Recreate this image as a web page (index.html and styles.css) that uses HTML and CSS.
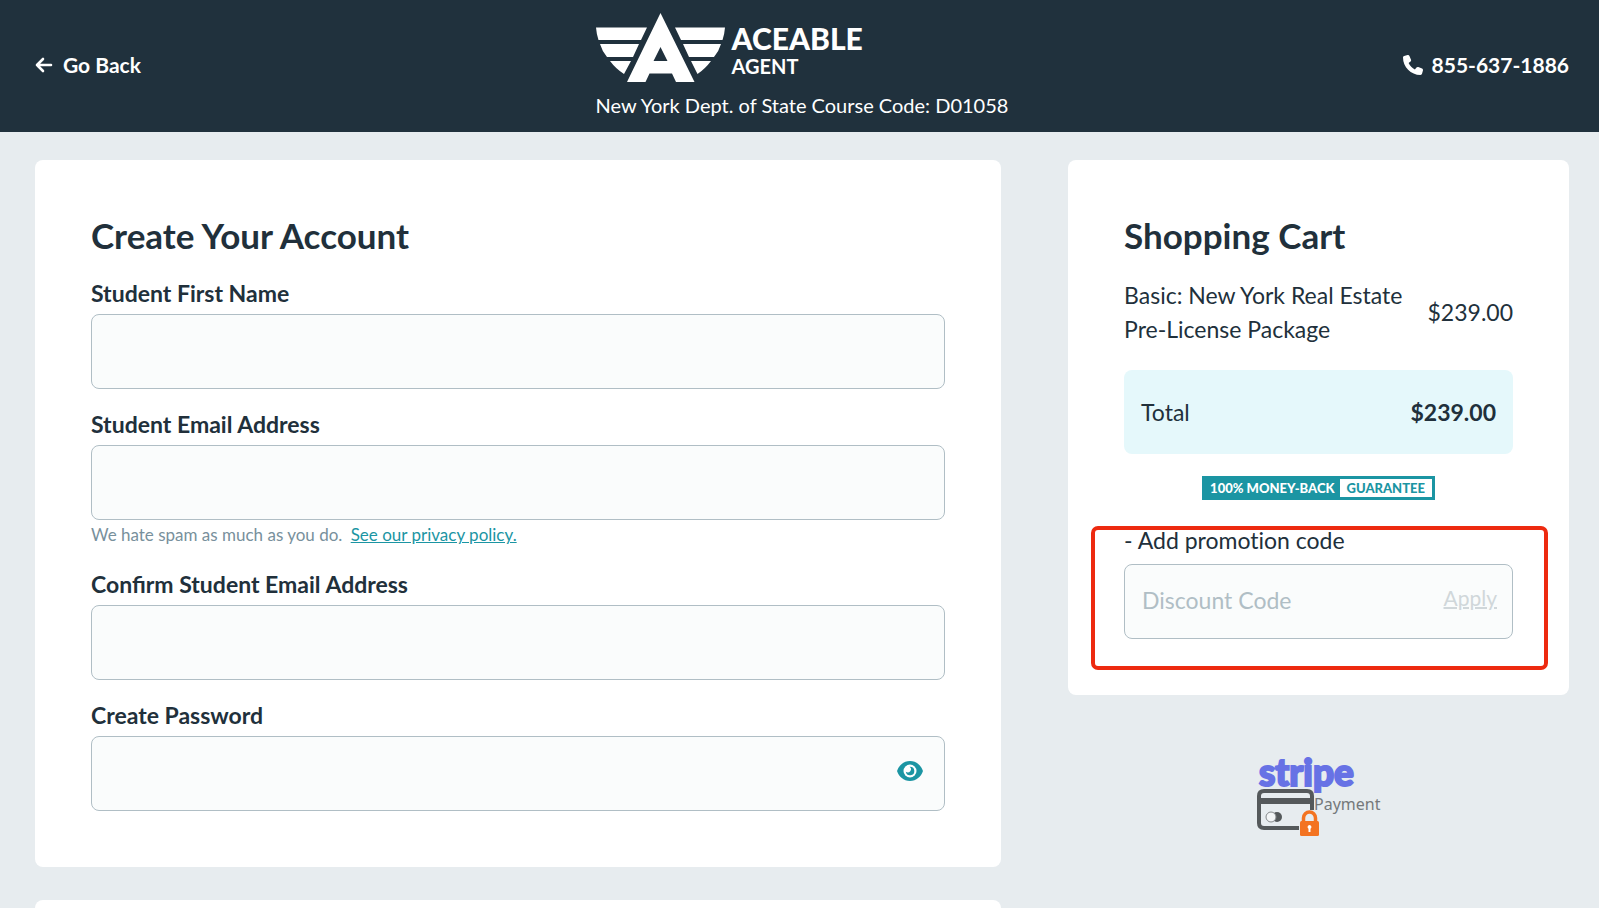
FILE: index.html
```html
<!DOCTYPE html>
<html lang="en">
<head>
<meta charset="utf-8">
<meta name="viewport" content="width=device-width, initial-scale=1">
<title>Aceable Agent Checkout</title>
<link rel="stylesheet" href="styles.css">
</head>
<body class="page">
<header class="header">
  <a class="back" href="#">
    <svg width="18" height="16" viewBox="0 0 18 16" fill="none" stroke="currentColor" stroke-width="2.6" stroke-linecap="round" stroke-linejoin="round" aria-hidden="true"><path d="M8 2 2 8 8 14M2 8H16"/></svg>
    <span>Go Back</span>
  </a>
  <div class="brand">
    <div class="logo">
      <svg width="130" height="70" viewBox="0 0 130 70" fill="#fff" aria-hidden="true">
        <path d="M0 14.500H51L45 27H2.500Q.5 21 0 14.500ZM4 31H43L37 44H11Q6 38 4 31ZM14 48H35L28 61Q20 56 14 48Z"/>
        <path d="M129 14.500H79L85 27H126.500Q128.500 21 129 14.500ZM125 31H87L93 44H118Q123 38 125 31ZM115 48H95L101.500 61Q109 56 115 48Z"/>
        <path fill-rule="evenodd" d="M64.500 0 98.500 69H80L76 60.500H53.500L49.500 69H31ZM64.500 34 57.500 48H71.500Z"/>
      </svg>
      <div class="logo-text">
        <span class="logo-name">ACEABLE</span>
        <span class="logo-sub">AGENT</span>
      </div>
    </div>
    <p class="course">New York Dept. of State Course Code: D01058</p>
  </div>
  <a class="phone" href="tel:855-637-1886">
    <svg width="20" height="20" viewBox="0 0 512 512" fill="currentColor" aria-hidden="true"><path d="M164.900 24.600c-7.700-18.600-28-28.500-47.400-23.200l-88 24C12.100 30.200 0 46 0 64c0 247.400 200.600 448 448 448 18 0 33.800-12.100 38.600-29.500l24-88c5.300-19.400-4.600-39.700-23.200-47.400l-96-40c-16.300-6.800-35.200-2.100-46.300 11.600L304.700 368C234.300 334.700 177.300 277.700 144 207.300L193.300 167c13.700-11.200 18.400-30 11.600-46.300z"/></svg>
    <span>855-637-1886</span>
  </a>
</header>

<main class="main">
  <div class="column">
    <form class="card">
      <h1 class="title">Create Your Account</h1>
      <div class="field">
        <label class="label" for="first">Student First Name</label>
        <input class="input" id="first" type="text">
      </div>
      <div class="field">
        <label class="label" for="email">Student Email Address</label>
        <input class="input" id="email" type="email">
        <p class="hint">We hate spam as much as you do. <a class="policy" href="#">See our privacy policy.</a></p>
      </div>
      <div class="field">
        <label class="label" for="confirm">Confirm Student Email Address</label>
        <input class="input" id="confirm" type="email">
      </div>
      <div class="field">
        <label class="label" for="password">Create Password</label>
        <div class="control">
          <input class="input" id="password" type="password">
          <button class="reveal" type="button" aria-label="Show password">
            <svg width="26" height="20" viewBox="0 0 26 20" aria-hidden="true"><path fill="#1b95a3" d="M13 0C6.500 0 2 4.500.3 9.200a2 2 0 0 0 0 1.600C2 15.500 6.500 20 13 20s11-4.500 12.700-9.200a2 2 0 0 0 0-1.600C24 4.500 19.500 0 13 0Z"/><circle cx="13" cy="10" r="6.500" fill="#fff"/><path fill="#1b95a3" d="M13 5.700a4.300 4.300 0 1 1-4.200 5.100A3 3 0 0 0 12.600 5.700Z"/></svg>
          </button>
        </div>
      </div>
    </form>
    <section class="next-card"></section>
  </div>

  <aside class="sidebar">
    <section class="card">
      <h2 class="title">Shopping Cart</h2>
      <div class="item">
        <span>Basic: New York Real Estate Pre-License Package</span>
        <span>$239.00</span>
      </div>
      <div class="total">
        <span>Total</span>
        <strong>$239.00</strong>
      </div>
      <div class="guarantee"><span class="guarantee-fill">100% MONEY-BACK</span><span class="guarantee-open">GUARANTEE</span></div>
      <div class="promo">
        <label class="promo-label" for="code">- Add promotion code</label>
        <div class="control">
          <input class="input" id="code" type="text" placeholder="Discount Code">
          <button class="apply" type="button">Apply</button>
        </div>
        <div class="highlight"></div>
      </div>
    </section>
    <svg class="stripe" width="124" height="96" viewBox="0 -12 124 96" role="img" aria-label="Stripe Payment">
      <text class="stripe-name" x="2" y="31">stripe</text>
      <g fill="none" stroke="#55595b">
        <path stroke-width="4" d="M42 73H7Q2 73 2 68V41Q2 36 7 36H50Q55 36 55 41V55"/>
        <path stroke-width="6" d="M2 46H55"/>
      </g>
      <circle cx="20" cy="62" r="5" fill="#55595b"/>
      <circle cx="14" cy="62" r="5" fill="#f3f5f6" stroke="#85898b"/>
      <text class="stripe-sub" x="57" y="55">Payment</text>
      <path fill="none" stroke="#f37321" stroke-width="3.500" d="M46.500 68V63a6 6 0 0 1 12 0V68"/>
      <rect x="43" y="66" width="19" height="15" rx="1.500" fill="#f37321"/>
      <path fill="#fff" d="M52.500 70a2 2 0 0 1 1 3.700V77h-2V73.700a2 2 0 0 1 1-3.700Z"/>
    </svg>
  </aside>
</main>
</body>
</html>
```
FILE: styles.css
```css
* {
  box-sizing: border-box;
}

.page {
  margin: 0;
  min-height: 100vh;
  display: flex;
  flex-direction: column;
  background: #e7ecef;
  color: #21303b;
  font: 23px/34px Lato, "Open Sans", sans-serif;
}

.header {
  display: grid;
  grid-template-columns: 1fr auto 1fr;
  align-items: center;
  padding: 13px 30px 12px 35px;
  background: #20313d;
  color: #fff;
}

.back,
.phone {
  display: flex;
  align-items: center;
  padding-bottom: 3px;
  color: #fff;
  font-size: 21px;
  font-weight: 700;
  text-decoration: none;
}

.back {
  gap: 10px;
}

.phone {
  gap: 9px;
  justify-self: end;
}

.logo {
  display: flex;
  align-items: center;
  gap: 6px;
}

.logo-text {
  display: flex;
  flex-direction: column;
  padding-top: 4px;
}

.logo-name {
  font-size: 30px;
  font-weight: 900;
  line-height: 32px;
}

.logo-sub {
  font-size: 20px;
  font-weight: 700;
  line-height: 24px;
}

.course {
  margin: 7px 0 0;
  font-size: 20px;
  line-height: 30px;
}

.main {
  flex: 1;
  display: grid;
  grid-template-columns: minmax(0, 27fr) minmax(0, 14fr);
  gap: 67px;
  padding: 28px 30px 0 35px;
}

.column {
  display: flex;
  flex-direction: column;
  gap: 33px;
}

.card {
  padding: 56px;
  border-radius: 8px;
  background: #fff;
}

.next-card {
  flex: 1;
  border-radius: 8px 8px 0 0;
  background: #fff;
}

.title {
  margin: 0 0 24px;
  font-size: 35px;
  font-weight: 700;
  line-height: 38px;
}

.field {
  display: flex;
  flex-direction: column;
}

.field + .field {
  margin-top: 20px;
}

.label {
  padding-bottom: 6px;
  font-weight: 700;
  line-height: 30px;
}

.control {
  position: relative;
}

.input {
  display: block;
  width: 100%;
  height: 75px;
  padding: 0 17px 3px;
  border: 1px solid #b0bec5;
  border-radius: 8px;
  background: #fafcfc;
  color: inherit;
  font: inherit;
}

.input::placeholder {
  color: #b0bec5;
  opacity: 1;
}

.hint {
  margin: 0;
  color: #78909c;
  font-size: 17px;
  line-height: 29px;
}

.policy {
  margin-left: 4px;
  color: #1b95a3;
}

.reveal,
.apply {
  position: absolute;
  border: 0;
  padding: 0;
  background: none;
}

.reveal {
  right: 22px;
  top: 25px;
  height: 20px;
  line-height: 0;
}

.apply {
  right: 16px;
  top: 19px;
  color: #d0d7da;
  font: inherit;
  font-size: 21px;
  line-height: 30px;
  text-decoration: underline;
  text-decoration-thickness: 2px;
}

.item {
  display: flex;
  align-items: center;
  justify-content: space-between;
  gap: 16px;
  margin-bottom: 24px;
}

.total {
  display: flex;
  align-items: center;
  justify-content: space-between;
  height: 84px;
  padding: 0 17px;
  border-radius: 8px;
  background: #e5f8fb;
}

.guarantee {
  display: flex;
  width: max-content;
  margin: 22px auto 23px;
  border: 3px solid #1b95a3;
  font-size: 13px;
  font-weight: 900;
  line-height: 18px;
}

.guarantee-fill {
  padding: 0 5px;
  background: #1b95a3;
  color: #fff;
}

.guarantee-open {
  padding: 0 7px;
  color: #1b95a3;
}

.promo {
  position: relative;
}

.promo-label {
  display: block;
  padding-bottom: 7px;
  font-variant-ligatures: none;
}

.highlight {
  position: absolute;
  inset: 3px -35px -31px -33px;
  border: 4px solid #ed2a10;
  border-radius: 7px;
  pointer-events: none;
}

.stripe {
  display: block;
  margin: 48px auto 0;
}

.stripe-name {
  fill: #6772e5;
  stroke: #6772e5;
  stroke-width: 2;
  font-size: 37px;
  font-weight: 900;
}

.stripe-sub {
  fill: #75797b;
  font-family: "Noto Sans", sans-serif;
  font-size: 16px;
}
```
